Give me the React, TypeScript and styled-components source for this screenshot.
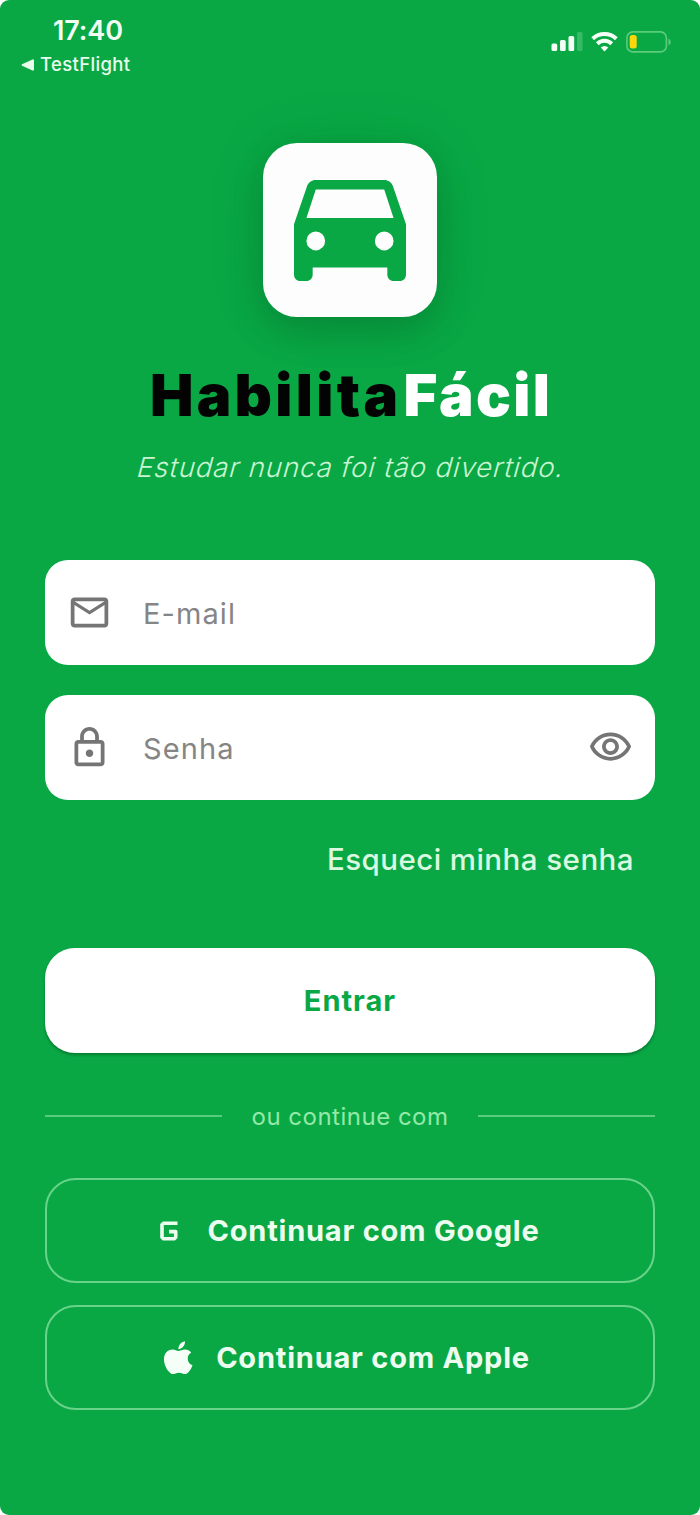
import React from "react";
import styled, { createGlobalStyle } from "styled-components";

const GREEN = "#09a845";

const GlobalStyle = createGlobalStyle`
  * { box-sizing: border-box; }
  body {
    margin: 0;
    background: #ffffff;
    font-family: Inter, "Liberation Sans", sans-serif;
  }
  button, input { font-family: inherit; }
`;

const Screen = styled.main`
  width: 700px;
  height: 1515px;
  padding: 0 45px;
  display: flex;
  flex-direction: column;
  background: ${GREEN};
  border-radius: 9px;
  overflow: hidden;
  color: #ffffff;
`;

const StatusBar = styled.header`
  height: 143px;
  margin: 0 -45px;
  padding: 16px 28px 0 21px;
  display: flex;
  justify-content: space-between;
`;

const StatusLeft = styled.div`
  display: flex;
  flex-direction: column;
`;

const Clock = styled.time`
  padding-left: 32px;
  font-size: 27px;
  font-weight: 600;
  line-height: 30px;
  letter-spacing: -0.1px;
  color: #f0fff2;
`;

const BackToApp = styled.div`
  display: flex;
  align-items: center;
  gap: 6px;
  margin-top: 6px;
  font-size: 18.5px;
  font-weight: 500;
  line-height: 25px;
  letter-spacing: 0.35px;
  color: #e9fdec;
`;

const StatusIcons = styled.div`
  display: flex;
  align-items: flex-start;
  gap: 8px;
  padding-top: 15px;
`;

const Brand = styled.section`
  display: flex;
  flex-direction: column;
  align-items: center;
`;

const LogoTile = styled.div`
  width: 174px;
  height: 174px;
  display: flex;
  align-items: center;
  justify-content: center;
  border-radius: 34px;
  background: #fdfdfd;
  box-shadow: 0 15px 38px rgba(0, 0, 0, 0.15), 0 0 60px rgba(0, 60, 20, 0.1);
`;

const Title = styled.h1`
  margin: 43px 0 0;
  padding-left: 2px;
  font-size: 58px;
  font-weight: 900;
  line-height: 70px;
  letter-spacing: 2.3px;
  white-space: nowrap;
  color: #ffffff;
`;

const TitleDark = styled.span`
  margin-right: 2px;
  letter-spacing: 3.3px;
  color: #030303;
`;

const Tagline = styled.p`
  margin: 19px 0 0;
  padding-left: 3px;
  font-size: 27.5px;
  font-weight: 300;
  line-height: 36px;
  letter-spacing: 0.93px;
  white-space: nowrap;
  color: #c9f5d2;
  transform: skewX(-15deg);
`;

const Form = styled.form`
  display: flex;
  flex-direction: column;
  margin-top: 75px;
`;

const Field = styled.label`
  height: 105px;
  margin-bottom: 29.5px;
  padding: 0 22px;
  display: flex;
  align-items: center;
  border-radius: 23px;
  background: #ffffff;
  color: #757575;
`;

const Input = styled.input`
  flex: 1;
  min-width: 0;
  margin-left: 31px;
  padding: 2px 0 0;
  border: 0;
  outline: 0;
  background: transparent;
  font-size: 29px;
  letter-spacing: 1.1px;
  color: #757575;
  &::placeholder { color: #858585; opacity: 1; }
`;

const Forgot = styled.a`
  align-self: flex-end;
  margin: 12px 21px 0 0;
  font-size: 29.5px;
  font-weight: 500;
  line-height: 36px;
  letter-spacing: 0.45px;
  white-space: nowrap;
  color: #daf9e0;
`;

const Submit = styled.button`
  height: 105px;
  margin-top: 71px;
  border: 0;
  border-radius: 30px;
  background: #ffffff;
  box-shadow: 0 2px 3px rgba(0, 40, 10, 0.35);
  font-size: 29px;
  font-weight: 700;
  letter-spacing: 1px;
  color: ${GREEN};
`;

const Divider = styled.div`
  display: flex;
  align-items: center;
  justify-content: space-between;
  height: 32px;
  margin-top: 47px;
  font-size: 24px;
  letter-spacing: 0.5px;
  white-space: nowrap;
  color: #94e8a8;
`;

const Rule = styled.span`
  width: 177px;
  height: 2px;
  background: #58cb7d;
`;

const Social = styled.div`
  display: flex;
  flex-direction: column;
  gap: 22px;
  margin-top: 46px;
`;

const SocialButton = styled.button<{ $gap: number; $end: number }>`
  height: 105px;
  display: flex;
  align-items: center;
  justify-content: center;
  gap: ${({ $gap }) => $gap}px;
  padding: 0 ${({ $end }) => $end}px 0 0;
  border: 2px solid #68d389;
  border-radius: 31px;
  background: transparent;
  font-size: 29px;
  font-weight: 700;
  letter-spacing: 0.78px;
  white-space: nowrap;
  color: #ecfdef;
`;

const materialPaths = {
  mail: "M22 6c0-1.1-.9-2-2-2H4c-1.1 0-2 .9-2 2v12c0 1.1.9 2 2 2h16c1.1 0 2-.9 2-2V6zm-2 0l-8 5-8-5h16zm0 12H4V8l8 5 8-5v10z",
  lock: "M18 8h-1V6c0-2.76-2.24-5-5-5S7 3.24 7 6v2H6c-1.1 0-2 .9-2 2v10c0 1.1.9 2 2 2h12c1.1 0 2-.9 2-2V10c0-1.1-.9-2-2-2zM9 6c0-1.66 1.34-3 3-3s3 1.34 3 3v2H9V6zm9 14H6V10h12v10zm-6-3c1.1 0 2-.9 2-2s-.9-2-2-2-2 .9-2 2 .9 2 2 2z",
  eye: "M12 6c3.79 0 7.17 2.13 8.82 5.5C19.17 14.87 15.79 17 12 17s-7.17-2.13-8.82-5.5C4.83 8.13 8.21 6 12 6m0-2C7 4 2.73 7.11 1 11.5 2.73 15.89 7 19 12 19s9.27-3.11 11-7.5C21.27 7.11 17 4 12 4zm0 5c1.38 0 2.5 1.12 2.5 2.5S13.38 14 12 14s-2.5-1.12-2.5-2.5S10.62 9 12 9m0-2c-2.48 0-4.5 2.02-4.5 4.5S9.52 16 12 16s4.5-2.02 4.5-4.5S14.48 7 12 7z",
};

function MaterialIcon({ name }: { name: keyof typeof materialPaths }) {
  return (
    <svg width="45" height="45" viewBox="0 0 24 24" fill="currentColor" aria-hidden>
      <path d={materialPaths[name]} />
    </svg>
  );
}

function CarIcon() {
  return (
    <svg width="112" height="101" viewBox="3 5 18 16" preserveAspectRatio="none" fill={GREEN} aria-hidden>
      <path
        fillRule="evenodd"
        d="M18.92 6.01C18.72 5.42 18.16 5 17.5 5h-11c-.66 0-1.21.42-1.42 1.01L3 12v8c0 .55.45 1 1 1h1c.55 0 1-.45 1-1v-1.15h12V20c0 .55.45 1 1 1h1c.55 0 1-.45 1-1v-8l-2.08-5.99zM6.5 16.15a1.5 1.5 0 1 1 0-3 1.5 1.5 0 0 1 0 3zm11 0a1.5 1.5 0 1 1 0-3 1.5 1.5 0 0 1 0 3zM5 11l1.5-4.5h11L19 11H5z"
      />
    </svg>
  );
}

function SignalIcon() {
  return (
    <svg width="32" height="21" viewBox="0 0 32 21" fill="#f4fff6" aria-hidden>
      <rect x="0.5" y="12.5" width="5.7" height="7.5" rx="1.5" />
      <rect x="9" y="9" width="5.7" height="11" rx="1.5" />
      <rect x="17.5" y="5" width="5.7" height="15" rx="1.5" />
      <rect x="26" y="1" width="5.5" height="19" rx="1.5" opacity="0.2" />
    </svg>
  );
}

function WifiIcon() {
  return (
    <svg width="27" height="21" viewBox="0 0 27 21" fill="none" stroke="#f4fff6" strokeWidth="4" aria-hidden>
      <path d="M1.700 7.700a17 17 0 0 1 23.600 0" />
      <path d="M6.300 12.700a10.300 10.300 0 0 1 14.400 0" />
      <path d="M13.500 20.500l-3.800-3.900a5.400 5.400 0 0 1 7.600 0z" fill="#f4fff6" stroke="none" />
    </svg>
  );
}

function BatteryIcon() {
  return (
    <svg width="46" height="22" viewBox="0 0 46 22" aria-hidden>
      <rect x="0.9" y="0.9" width="39.5" height="20" rx="6" fill="none" stroke="#5ccb7a" strokeWidth="1.6" />
      <rect x="3.7" y="4" width="7" height="13.5" rx="2.5" fill="#fbd60b" />
      <path d="M42.500 7.500q2.300 1 2.300 3.500t-2.300 3.500z" fill="#5ccb7a" />
    </svg>
  );
}

function GoogleIcon() {
  return (
    <svg width="18" height="20" viewBox="0 0 18 20" fill="none" stroke="currentColor" strokeWidth="3.600" strokeLinejoin="round" aria-hidden>
      <path d="M17.500 2.300H3.500L2 3.800v12.400l1.500 1.500h10.700l1.500-1.500V10.600H9" />
    </svg>
  );
}

function AppleIcon() {
  return (
    <svg width="29" height="34" viewBox="0 0 29 34" fill="#f6fff7" aria-hidden>
      <path d="M14.400 8.200C14.200 4.200 17 .9 21 .2c.3 3.900-2.600 7.400-6.600 8z" />
      <path d="M8.500 8.600c2.500 0 4.200 1.400 6 1.400s3.700-1.500 6.400-1.500c2.600 0 4.800 1.100 6.300 3-2.200 1.400-3.500 3.400-3.500 6 0 3.200 1.900 5.600 4.800 6.700-.9 2.800-2.500 5.500-4.400 7.400-1.900 1.900-3.700 1.700-5.600.9-2.500-1-4.600-1-7 0-2.100.9-3.900.9-5.700-.9C2.400 28.300 0 23 0 18.400 0 12.500 3.700 8.600 8.500 8.600z" />
    </svg>
  );
}

export default function App() {
  return (
    <>
      <GlobalStyle />
      <Screen>
        <StatusBar>
          <StatusLeft>
            <Clock>17:40</Clock>
            <BackToApp>
              <svg width="13" height="12" viewBox="0 0 13 12" fill="currentColor" aria-hidden>
                <path d="M1 5.200L11.500.4Q13 0 13 1.400v9.200q0 1.400-1.500 1L1 6.800Q0 6 1 5.200z" />
              </svg>
              TestFlight
            </BackToApp>
          </StatusLeft>
          <StatusIcons>
            <SignalIcon />
            <WifiIcon />
            <BatteryIcon />
          </StatusIcons>
        </StatusBar>

        <Brand>
          <LogoTile>
            <CarIcon />
          </LogoTile>
          <Title>
            <TitleDark>Habilita</TitleDark>Fácil
          </Title>
          <Tagline>Estudar nunca foi tão divertido.</Tagline>
        </Brand>

        <Form onSubmit={(e) => e.preventDefault()}>
          <Field>
            <MaterialIcon name="mail" />
            <Input type="email" placeholder="E-mail" />
          </Field>
          <Field>
            <MaterialIcon name="lock" />
            <Input type="password" placeholder="Senha" />
            <MaterialIcon name="eye" />
          </Field>
          <Forgot>Esqueci minha senha</Forgot>
          <Submit type="submit">Entrar</Submit>
        </Form>

        <Divider>
          <Rule />
          ou continue com
          <Rule />
        </Divider>

        <Social>
          <SocialButton $gap={30} $end={1}>
            <GoogleIcon />
            Continuar com Google
          </SocialButton>
          <SocialButton $gap={23} $end={6}>
            <AppleIcon />
            Continuar com Apple
          </SocialButton>
        </Social>
      </Screen>
    </>
  );
}
